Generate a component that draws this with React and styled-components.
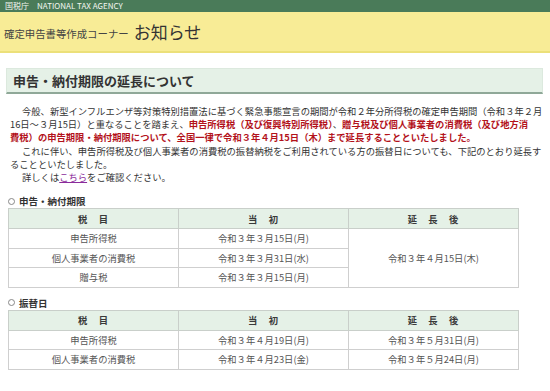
import React from "react";
import styled, { createGlobalStyle } from "styled-components";

const GlobalStyle = createGlobalStyle`
  body {
    margin: 0;
    background: #fff;
    font-family: "Noto Sans CJK JP", "Noto Sans", sans-serif;
    color: #333;
  }
`;

const AgencyBar = styled.div`
  height: 12px;
  background: #4a7b59;
  color: #f2f6f0;
  font-size: 8px;
  line-height: 12px;
  padding-left: 5px;
  white-space: nowrap;
`;

const CornerBand = styled.div`
  height: 39px;
  background: #f8ec96;
  border-bottom: 2px solid #ece07a;
  display: flex;
  align-items: center;
  padding-left: 4px;
  gap: 5px;
`;

const CornerName = styled.span`
  font-size: 10.4px;
  color: #444;
  padding-top: 4px;
`;

const PageTitle = styled.span`
  font-size: 17px;
  color: #333;
`;

const Panel = styled.div`
  margin: 15px 7px 0 6px;
`;

const Heading = styled.h2`
  margin: 0;
  height: 23px;
  background: #e5f1e7;
  border: 1px solid #dce9de;
  border-bottom: 2px solid #8fa898;
  font-size: 13px;
  font-weight: bold;
  line-height: 23px;
  padding-left: 6px;
  color: #333;
`;

const Body = styled.div`
  padding: 11px 0 0 4px;
  font-size: 9.3px;
  line-height: 13.2px;
  color: #333;
  white-space: nowrap;
`;

const Para = styled.p`
  margin: 0;
  text-indent: ${(p) => (p.$indent ? "12px" : "0")};
`;

const Red = styled.span`
  color: #b3121b;
  font-weight: bold;
`;

const Link = styled.a`
  color: #8b2b9b;
  text-decoration: underline;
`;

const Label = styled.div`
  margin: ${(p) => p.$top} 0 0 2px;
  font-size: 9.5px;
  font-weight: bold;
  line-height: 14px;
  display: flex;
  align-items: center;
  gap: 4px;
  color: #333;
`;

const Circle = styled.span`
  width: 5px;
  height: 5px;
  border: 1px solid #888;
  border-radius: 50%;
`;

const Table = styled.table`
  margin-left: 2px;
  width: 511px;
  border-collapse: collapse;
  table-layout: fixed;
  font-size: 9.3px;
`;

const Th = styled.th`
  background: #e5f1e7;
  border: 1px solid #c9cfca;
  height: 19px;
  padding: 0;
  font-weight: bold;
  color: #3a3a3a;
  letter-spacing: 1px;
`;

const Td = styled.td`
  border: 1px solid #cfcfcf;
  height: 18.5px;
  padding: 0;
  text-align: center;
  color: #555;
`;

const Header = () => (
  <tr>
    <Th>税　目</Th>
    <Th>当　初</Th>
    <Th>延　長　後</Th>
  </tr>
);

export default function App() {
  return (
    <>
      <GlobalStyle />
      <AgencyBar>国税庁　NATIONAL TAX AGENCY</AgencyBar>
      <CornerBand>
        <CornerName>確定申告書等作成コーナー</CornerName>
        <PageTitle>お知らせ</PageTitle>
      </CornerBand>
      <Panel>
        <Heading>申告・納付期限の延長について</Heading>
        <Body>
          <Para $indent>
            今般、新型インフルエンザ等対策特別措置法に基づく緊急事態宣言の期間が令和２年分所得税の確定申告期間（令和３年２月
            <br />
            16日～３月15日）と重なることを踏まえ、<Red>申告所得税（及び復興特別所得税）</Red>、
            <Red>
              贈与税及び個人事業者の消費税（及び地方消
              <br />
              費税）の申告期限・納付期限について、全国一律で令和３年４月15日（木）まで延長することといたしました。
            </Red>
          </Para>
          <Para $indent>
            これに伴い、申告所得税及び個人事業者の消費税の振替納税をご利用されている方の振替日についても、下記のとおり延長す
            <br />
            ることといたしました。
          </Para>
          <Para $indent>
            詳しくは<Link href="#">こちら</Link>をご確認ください。
          </Para>
        </Body>
        <Label $top="10px">
          <Circle />
          申告・納付期限
        </Label>
        <Table>
          <thead>
            <Header />
          </thead>
          <tbody>
            <tr>
              <Td>申告所得税</Td>
              <Td>令和３年３月15日(月)</Td>
              <Td rowSpan={3}>令和３年４月15日(木)</Td>
            </tr>
            <tr>
              <Td>個人事業者の消費税</Td>
              <Td>令和３年３月31日(水)</Td>
            </tr>
            <tr>
              <Td>贈与税</Td>
              <Td>令和３年３月15日(月)</Td>
            </tr>
          </tbody>
        </Table>
        <Label $top="8px">
          <Circle />
          振替日
        </Label>
        <Table>
          <thead>
            <Header />
          </thead>
          <tbody>
            <tr>
              <Td>申告所得税</Td>
              <Td>令和３年４月19日(月)</Td>
              <Td>令和３年５月31日(月)</Td>
            </tr>
            <tr>
              <Td>個人事業者の消費税</Td>
              <Td>令和３年４月23日(金)</Td>
              <Td>令和３年５月24日(月)</Td>
            </tr>
          </tbody>
        </Table>
      </Panel>
    </>
  );
}
